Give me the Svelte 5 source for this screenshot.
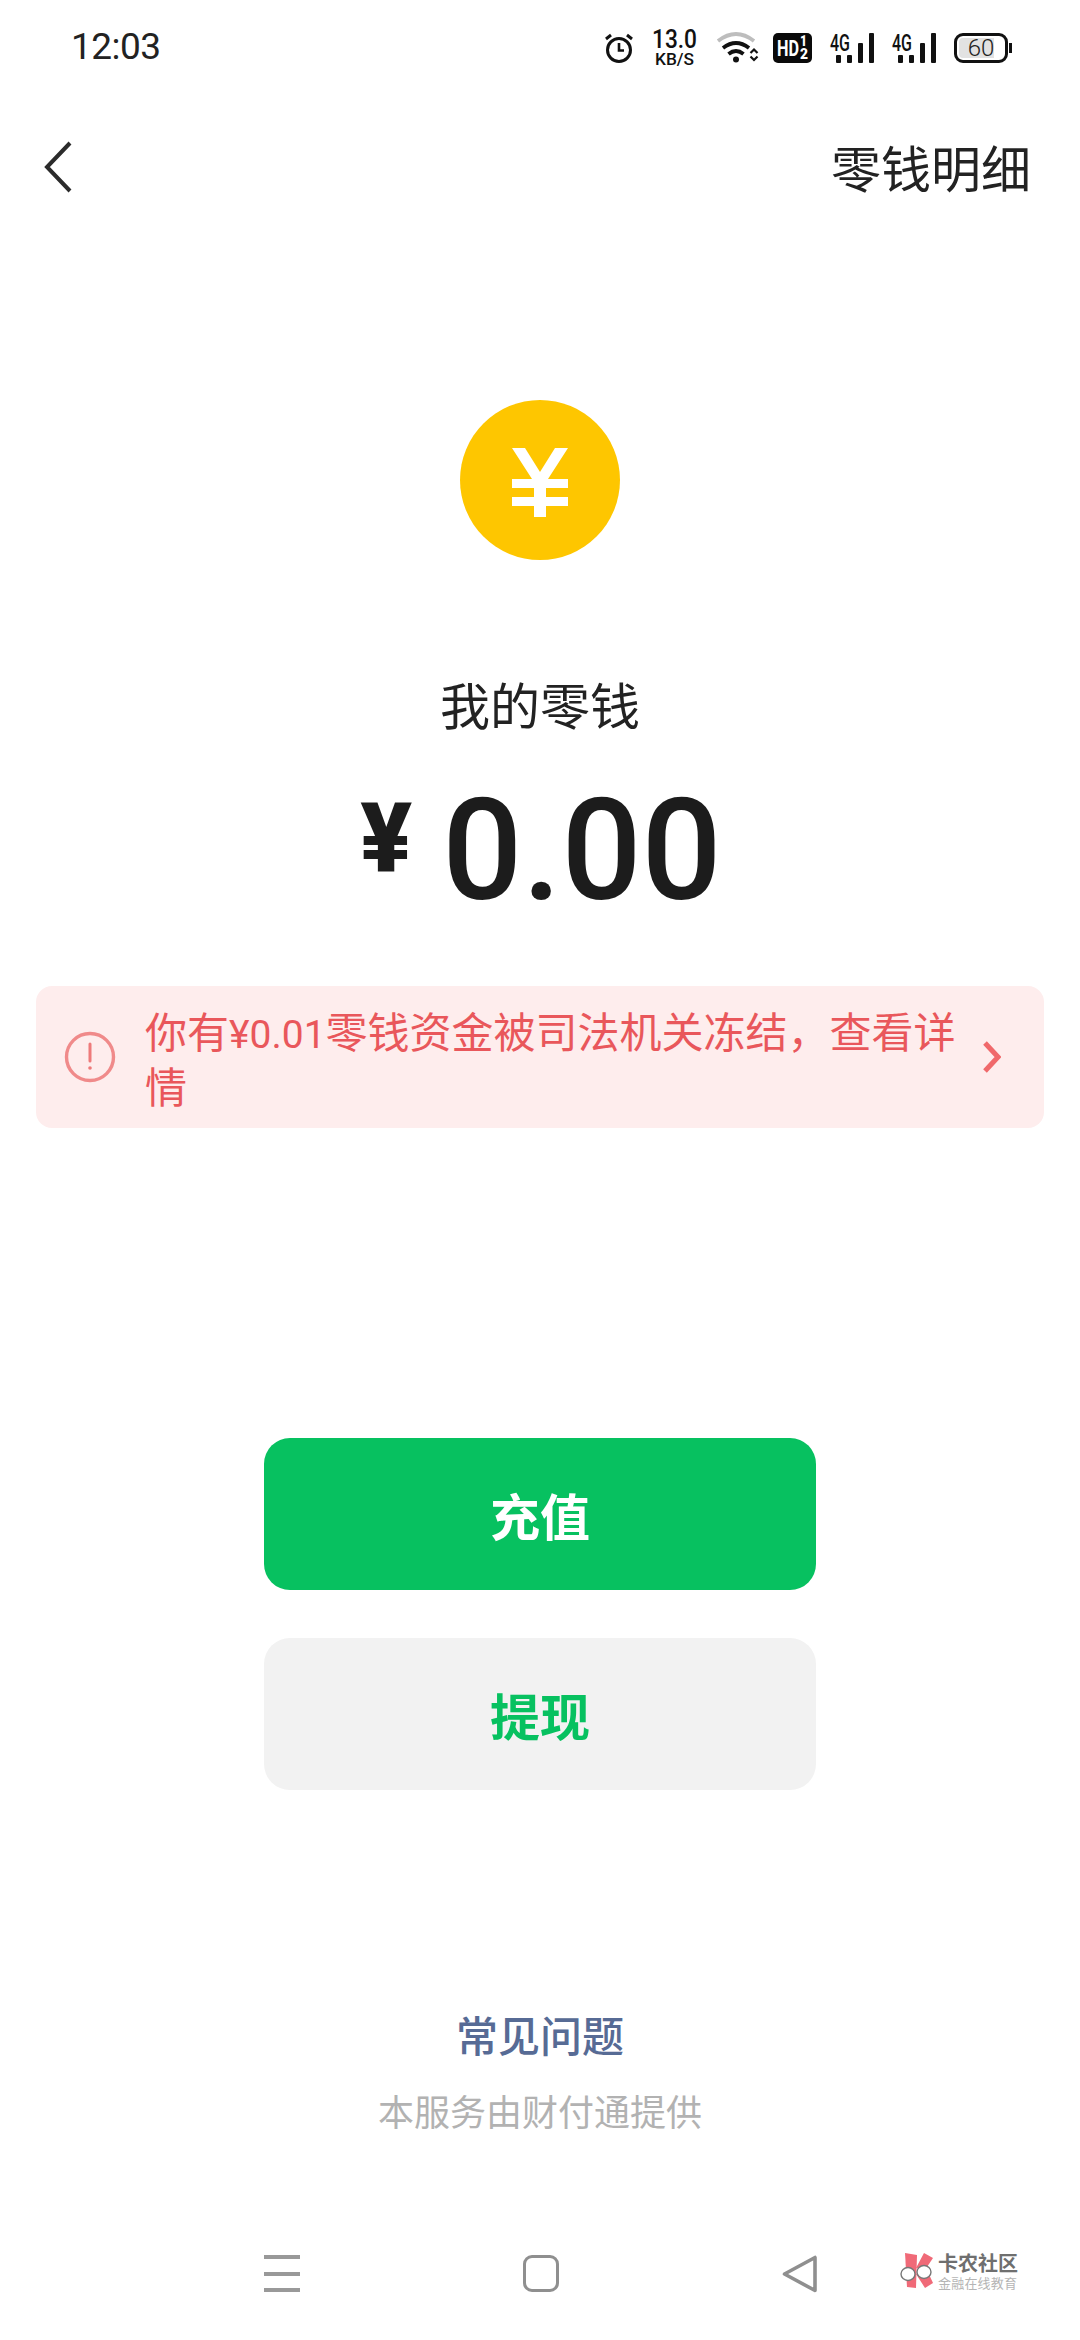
<script>
  const faq = '常见问题';
  const bars = [
    { x: 6, y: 22, h: 8 },
    { x: 17, y: 22, h: 8 },
    { x: 28, y: 10, h: 20 },
    { x: 39, y: 0, h: 30 }
  ];
</script>

<div class="page">
  <div class="status">
    <span class="time">12:03</span>
    <div class="icons">
      <svg class="alarm" width="30" height="30" viewBox="0 0 30 30" fill="none" stroke="#111" stroke-width="3">
        <circle cx="15" cy="17" r="11.500"/>
        <path d="M15 10v7.500h5" stroke-width="2.600"/>
        <path d="M2 6l5-4M28 6l-5-4" stroke-width="3"/>
      </svg>
      <svg class="speed" width="46" height="36" viewBox="0 0 46 36" fill="#111">
        <text x="0" y="18" font-family="Roboto" font-size="25" font-weight="500" textLength="45" lengthAdjust="spacingAndGlyphs">13.0</text>
        <text x="3" y="35" font-family="Roboto" font-size="17" font-weight="500" textLength="39" lengthAdjust="spacingAndGlyphs">KB/S</text>
      </svg>
      <svg class="wifi" width="41" height="30" viewBox="0 0 41 30" fill="none">
        <path d="M1 8Q19 -6 37 8" stroke="#bdbdbd" stroke-width="3.800"/>
        <path d="M6 15Q19 5 32 15" stroke="#111" stroke-width="3.800"/>
        <path d="M11.500 21Q19 15 26.500 21" stroke="#111" stroke-width="3.800"/>
        <circle cx="19" cy="26.500" r="3" fill="#111"/>
        <path d="M33.500 20l3.500-3.500 3.500 3.500M33.500 23.500l3.500 3.500 3.500-3.500" stroke="#111" stroke-width="2.200"/>
      </svg>
      <svg class="hd" width="39" height="30" viewBox="0 0 39 30">
        <rect width="39" height="30" rx="5" fill="#0a0a0a"/>
        <text x="4" y="23" fill="#fff" font-family="Roboto" font-size="22" font-weight="700" textLength="22" lengthAdjust="spacingAndGlyphs">HD</text>
        <text x="27" y="13" fill="#fff" font-family="Roboto" font-size="14" font-weight="900" textLength="7" lengthAdjust="spacingAndGlyphs">1</text>
        <text x="27" y="26" fill="#fff" font-family="Roboto" font-size="14" font-weight="900" textLength="8" lengthAdjust="spacingAndGlyphs">2</text>
      </svg>
      {#each [0, 1] as n (n)}
        <svg class="net" width="44" height="30" viewBox="0 0 44 30" fill="#111">
          <text x="0" y="18" font-family="Roboto" font-size="23" font-weight="500" textLength="20" lengthAdjust="spacingAndGlyphs">4G</text>
          {#each bars as b (b.x)}
            <rect x={b.x} y={b.y} width="5" height={b.h} rx="1"/>
          {/each}
        </svg>
      {/each}
      <div class="batt"><div class="cell"><span>60</span></div><div class="nub"></div></div>
    </div>
  </div>

  <header class="head">
    <svg width="30" height="52" viewBox="0 0 30 52" fill="none" stroke="#2b2b2b" stroke-width="4"><path d="M27 2L4 26l23 24"/></svg>
    <span class="detail">零钱明细</span>
  </header>

  <main class="main">
    <svg class="coin" width="160" height="160" viewBox="0 0 160 160">
      <circle cx="80" cy="80" r="80" fill="#fec600"/>
      <path d="M52 48h13l15 24 15-24h13L88 79h20v9H86v9h22v9H86v11H74v-11H52v-9h22v-9H52v-9h20z" fill="#fff"/>
    </svg>
    <div class="label">我的零钱</div>
    <div class="amount"><span class="yen">¥</span><span class="num">0.00</span></div>

    <div class="notice">
      <svg class="warn" width="52" height="52" viewBox="0 0 52 52" fill="none" stroke="#f08a8a" stroke-width="3.400">
        <circle cx="26" cy="26" r="23.500"/>
        <path d="M26 13v17" stroke-linecap="round" stroke="#ee7a7a" stroke-width="3"/>
        <circle cx="26" cy="37" r="1.800" fill="#ee7a7a" stroke="none"/>
      </svg>
      <p class="msg">你有<span class="sum">¥0.01</span>零钱资金被司法机关冻结，查看详情</p>
      <svg class="chev" width="20" height="32" viewBox="0 0 20 32" fill="none" stroke="#f0696b" stroke-width="5"><path d="M4 2l13 14L4 30"/></svg>
    </div>

    <div class="buttons">
      <button class="btn primary">充值</button>
      <button class="btn secondary">提现</button>
    </div>

    <div class="foot">
      <div class="faq">{faq}</div>
      <div class="provider">本服务由财付通提供</div>
    </div>
  </main>

  <nav class="nav">
    <div class="menu"><i></i><i></i><i></i></div>
    <div class="square"></div>
    <svg class="tri" width="36" height="38" viewBox="0 0 36 38" fill="none" stroke="#8f8f8f" stroke-width="3.600" stroke-linejoin="round"><path d="M33 2.500v33L2.500 19z"/></svg>
  </nav>

  <div class="mark">
    <svg width="34" height="36" viewBox="0 0 34 36">
      <path d="M5 0l12 2-1 33-9-1z" fill="#f06a78"/>
      <path d="M16 15L24 0l9 5-8 12z" fill="#f06a78"/>
      <path d="M16 21l11-4 6 13-8 5z" fill="#f06a78"/>
      <ellipse cx="8" cy="21" rx="7" ry="6.500" fill="#fff" stroke="#777" stroke-width="1.400"/>
      <ellipse cx="24" cy="19" rx="7" ry="6.500" fill="#fff" stroke="#777" stroke-width="1.400"/>
    </svg>
    <div class="mark-text"><b>卡农社区</b><span>金融在线教育</span></div>
  </div>
</div>

<style>
  :global(body) { margin: 0; background: #fff; }
  .page {
    position: relative;
    width: 1080px;
    height: 2340px;
    background: #fff;
    overflow: hidden;
    font-family: "Noto Sans CJK SC", "Noto Sans", sans-serif;
    color: #1a1a1a;
  }
  .status {
    height: 96px;
    box-sizing: border-box;
    padding: 25px 68px 0 71px;
    display: flex;
    justify-content: space-between;
    align-items: flex-start;
  }
  .time {
    font: 400 37px/44px Roboto, sans-serif;
    letter-spacing: -0.500px;
    color: #222;
  }
  .icons {
    display: flex;
    align-items: flex-start;
    margin-top: 8px;
    height: 30px;
  }
  .icons svg { display: block; flex: none; overflow: visible; }
  .alarm { margin-right: 18px; }
  .speed { margin-right: 19px; margin-top: -3px; }
  .wifi { margin-right: 15px; }
  .hd { margin-right: 18px; }
  .net { margin-right: 18px; }
  .batt { display: flex; align-items: center; }
  .cell {
    box-sizing: border-box;
    width: 54px;
    height: 30px;
    border: 3px solid #111;
    border-radius: 9px;
    display: flex;
    align-items: center;
    justify-content: center;
    background: linear-gradient(90deg, #e2e2e2 77%, #fff 77%);
    box-shadow: inset 0 0 0 2px #fff;
  }
  .cell span { font: 300 24px/24px Roboto, sans-serif; color: #222; }
  .nub { width: 3px; height: 10px; background: #111; margin-left: 1px; }

  .head {
    height: 150px;
    box-sizing: border-box;
    padding: 0 49px 0 43px;
    display: flex;
    justify-content: space-between;
    align-items: center;
    margin-top: -2px;
  }
  .head svg { margin-top: -4px; }
  .detail { font-size: 50px; line-height: 64px; font-weight: 400; color: #222; margin-top: -6px; }

  .main {
    display: flex;
    flex-direction: column;
    align-items: center;
  }
  .coin {
    display: block;
    margin-top: 156px;
  }
  .label {
    margin-top: 110px;
    font-size: 50px;
    line-height: 66px;
    color: #222;
  }
  .amount {
    display: flex;
    align-items: flex-start;
    height: 160px;
    margin-top: 30px;
    margin-left: 2px;
    font-family: Roboto, sans-serif;
    color: #1c1c1c;
  }
  .yen {
    font-size: 96px;
    line-height: 120px;
    font-weight: 900;
    margin-top: 12px;
    margin-right: 30px;
  }
  .num {
    font-size: 141px;
    line-height: 170px;
    font-weight: 500;
  }
  .notice {
    box-sizing: border-box;
    width: 1008px;
    height: 142px;
    margin-top: 60px;
    padding: 0 43px 0 28px;
    border-radius: 16px;
    background: #feeded;
    display: flex;
    align-items: center;
  }
  .warn { flex: none; }
  .msg {
    flex: 1;
    margin: 0 0 0 29px;
    font-size: 42px;
    line-height: 55px;
    color: #e9575b;
    font-family: "Noto Sans CJK SC", sans-serif;
  }
  .sum { font-family: Roboto, sans-serif; font-size: 39px; line-height: 0; }
  .chev { flex: none; margin-left: 18px; }
  .buttons {
    margin-top: 310px;
    display: flex;
    flex-direction: column;
    gap: 48px;
  }
  .btn {
    width: 552px;
    height: 152px;
    border: none;
    border-radius: 26px;
    font-family: "Noto Sans CJK SC", sans-serif;
    font-size: 50px;
    font-weight: 700;
  }
  .primary { background: #07c160; color: #fff; }
  .secondary { background: #f2f2f2; color: #07c160; }
  .foot {
    margin-top: 210px;
    display: flex;
    flex-direction: column;
    align-items: center;
  }
  .faq { font-size: 42px; line-height: 68px; font-weight: 500; color: #576b95; }
  .provider { margin-top: 18px; font-size: 36px; line-height: 48px; color: #b2b2b2; }

  .nav {
    position: absolute;
    left: 264px;
    right: 262px;
    top: 2255px;
    display: flex;
    justify-content: space-between;
    align-items: flex-start;
  }
  .menu { width: 36px; height: 37px; display: flex; flex-direction: column; justify-content: space-between; }
  .menu i { display: block; height: 4px; background: #999; }
  .square {
    box-sizing: border-box;
    width: 36px;
    height: 37px;
    border: 3.600px solid #8f8f8f;
    border-radius: 9px;
  }
  .mark {
    position: absolute;
    left: 900px;
    top: 2251px;
    display: flex;
    gap: 4px;
  }
  .mark svg { margin-top: 2px; }
  .mark-text { display: flex; flex-direction: column; }
  .mark-text b { font-size: 20px; line-height: 24px; font-weight: 700; color: #6f6f6f; }
  .mark-text span { font-size: 13px; line-height: 16px; color: #b5b5b5; letter-spacing: 0.200px; }
</style>
